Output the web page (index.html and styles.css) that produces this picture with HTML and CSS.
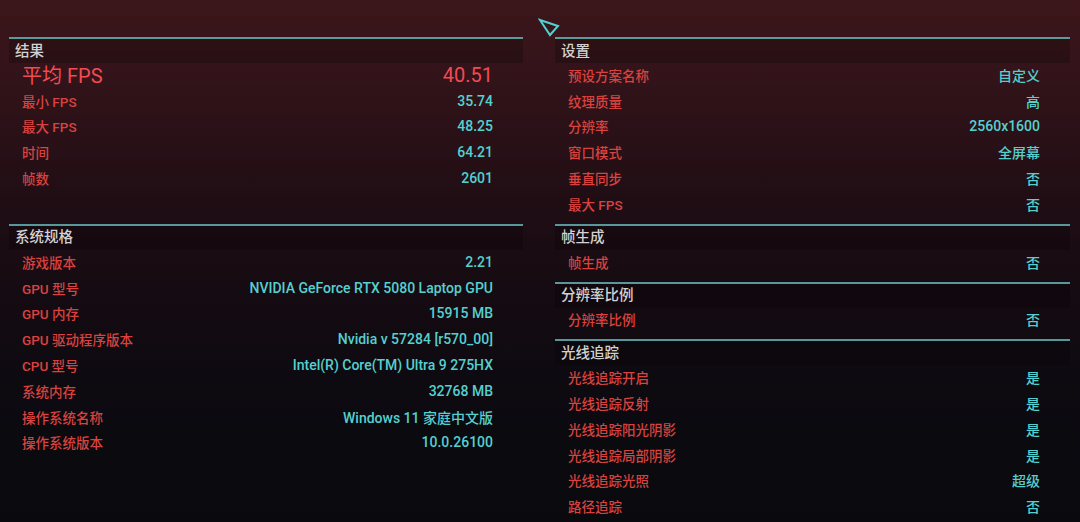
FILE: index.html
```html
<!DOCTYPE html>
<html lang="zh-CN">
<head>
<meta charset="utf-8">
<title>基准测试结果</title>
<link rel="stylesheet" href="styles.css">
</head>
<body>
<svg class="cursor" width="24" height="22" viewBox="0 0 24 22">
  <polygon points="2,3 20,9 12,18" fill="none" stroke="#4fd3d2" stroke-width="2" stroke-linejoin="miter"/>
</svg>
<main class="page">
  <div class="col col-left">
    <section class="sec">
      <div class="sec-head">结果</div>
      <div class="row row-big"><span class="lbl">平均 FPS</span><span class="val">40.51</span></div>
      <div class="row"><span class="lbl">最小 FPS</span><span class="val">35.74</span></div>
      <div class="row"><span class="lbl">最大 FPS</span><span class="val">48.25</span></div>
      <div class="row"><span class="lbl">时间</span><span class="val">64.21</span></div>
      <div class="row"><span class="lbl">帧数</span><span class="val">2601</span></div>
    </section>
    <section class="sec">
      <div class="sec-head">系统规格</div>
      <div class="row"><span class="lbl">游戏版本</span><span class="val">2.21</span></div>
      <div class="row"><span class="lbl">GPU 型号</span><span class="val">NVIDIA GeForce RTX 5080 Laptop GPU</span></div>
      <div class="row"><span class="lbl">GPU 内存</span><span class="val">15915 MB</span></div>
      <div class="row"><span class="lbl">GPU 驱动程序版本</span><span class="val">Nvidia v 57284 [r570_00]</span></div>
      <div class="row"><span class="lbl">CPU 型号</span><span class="val">Intel(R) Core(TM) Ultra 9 275HX</span></div>
      <div class="row"><span class="lbl">系统内存</span><span class="val">32768 MB</span></div>
      <div class="row"><span class="lbl">操作系统名称</span><span class="val">Windows 11 家庭中文版</span></div>
      <div class="row"><span class="lbl">操作系统版本</span><span class="val">10.0.26100</span></div>
    </section>
  </div>
  <div class="col col-right">
    <section class="sec">
      <div class="sec-head">设置</div>
      <div class="row"><span class="lbl">预设方案名称</span><span class="val">自定义</span></div>
      <div class="row"><span class="lbl">纹理质量</span><span class="val">高</span></div>
      <div class="row"><span class="lbl">分辨率</span><span class="val">2560x1600</span></div>
      <div class="row"><span class="lbl">窗口模式</span><span class="val">全屏幕</span></div>
      <div class="row"><span class="lbl">垂直同步</span><span class="val">否</span></div>
      <div class="row"><span class="lbl">最大 FPS</span><span class="val">否</span></div>
    </section>
    <section class="sec">
      <div class="sec-head">帧生成</div>
      <div class="row"><span class="lbl">帧生成</span><span class="val">否</span></div>
    </section>
    <section class="sec">
      <div class="sec-head">分辨率比例</div>
      <div class="row"><span class="lbl">分辨率比例</span><span class="val">否</span></div>
    </section>
    <section class="sec">
      <div class="sec-head">光线追踪</div>
      <div class="row"><span class="lbl">光线追踪开启</span><span class="val">是</span></div>
      <div class="row"><span class="lbl">光线追踪反射</span><span class="val">是</span></div>
      <div class="row"><span class="lbl">光线追踪阳光阴影</span><span class="val">是</span></div>
      <div class="row"><span class="lbl">光线追踪局部阴影</span><span class="val">是</span></div>
      <div class="row"><span class="lbl">光线追踪光照</span><span class="val">超级</span></div>
      <div class="row"><span class="lbl">路径追踪</span><span class="val">否</span></div>
    </section>
  </div>
</main>
</body>
</html>
```
FILE: styles.css
```css
html, body {
  margin: 0;
  padding: 0;
}
body {
  width: 1080px;
  height: 522px;
  overflow: hidden;
  position: relative;
  font-family: "Roboto", "Noto Sans CJK SC", sans-serif;
  background: linear-gradient(180deg, #3c161b 0%, #34141a 12%, #2a1117 25%, #1f0d14 40%, #160b12 55%, #0e0a11 72%, #0a0a0f 88%, #09090e 100%);
}
.cursor {
  position: absolute;
  left: 538px;
  top: 17px;
}
.page {
  display: grid;
  grid-template-columns: 514px 515px;
  column-gap: 32px;
  padding: 37px 10px 0 9px;
}
.col {
  display: flex;
  flex-direction: column;
}
.col-left {
  gap: 26px;
}
.sec {
  border-top: 2px solid rgba(98, 178, 180, 0.85);
  padding-bottom: 6px;
}
.sec-head {
  height: 24px;
  box-sizing: border-box;
  display: flex;
  align-items: center;
  padding: 0 0 4px 6px;
  background: rgba(0, 0, 0, 0.2);
  color: #d2d2d2;
  font-size: 14.5px;
  font-weight: 500;
}
.row {
  height: 25.8px;
  box-sizing: border-box;
  display: flex;
  align-items: center;
  justify-content: space-between;
  padding: 0 30px 2px 13px;
}
.lbl {
  color: #d9423f;
  font-size: 13.5px;
  font-weight: 500;
}
.val {
  color: #55d0cf;
  font-size: 14px;
  font-weight: 500;
}
.row-big .lbl,
.row-big .val {
  color: #f24b51;
  font-size: 20px;
  font-weight: 400;
}
```
